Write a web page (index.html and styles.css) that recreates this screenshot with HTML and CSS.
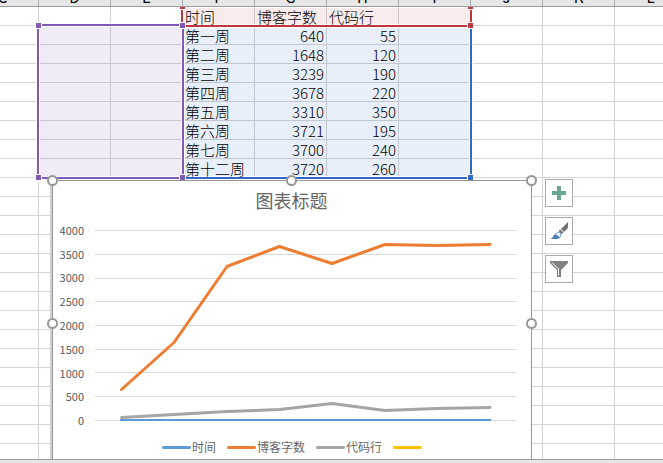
FILE: index.html
```
<!DOCTYPE html>
<html lang="zh-CN">
<head>
<meta charset="utf-8">
<title>博客字数</title>
<link rel="stylesheet" href="styles.css">
</head>
<body>
<main class="sheet">
  <div class="columns">
    <span>C</span><span>D</span><span>E</span><span>F</span><span>G</span><span>H</span><span>I</span><span>J</span><span>K</span><span>L</span>
  </div>
  <div class="cells">
    <div class="range range-values"><i class="handle se"></i></div>
    <div class="range range-names"><i class="handle nw"></i><i class="handle ne"></i><i class="handle se"></i></div>
    <div class="range range-labels"><i class="handle nw"></i><i class="handle ne"></i><i class="handle sw"></i><i class="handle se"></i></div>
    <table class="data">
      <thead>
        <tr><th>时间</th><th>博客字数</th><th>代码行</th><th></th></tr>
      </thead>
      <tbody>
        <tr><td>第一周</td><td class="num">640</td><td class="num">55</td><td></td></tr>
        <tr><td>第二周</td><td class="num">1648</td><td class="num">120</td><td></td></tr>
        <tr><td>第三周</td><td class="num">3239</td><td class="num">190</td><td></td></tr>
        <tr><td>第四周</td><td class="num">3678</td><td class="num">220</td><td></td></tr>
        <tr><td>第五周</td><td class="num">3310</td><td class="num">350</td><td></td></tr>
        <tr><td>第六周</td><td class="num">3721</td><td class="num">195</td><td></td></tr>
        <tr><td>第七周</td><td class="num">3700</td><td class="num">240</td><td></td></tr>
        <tr><td>第十二周</td><td class="num">3720</td><td class="num">260</td><td></td></tr>
      </tbody>
    </table>

    <section class="chart">
      <h1 class="chart-title">图表标题</h1>
      <div class="plot">
        <div class="axis">
          <span>4000</span><span>3500</span><span>3000</span><span>2500</span><span>2000</span><span>1500</span><span>1000</span><span>500</span><span>0</span>
        </div>
        <svg class="lines" viewBox="0 0 421 214" fill="none">
          <path stroke="#d9d9d9" d="M0 12.5H421M0 36.5H421M0 60.5H421M0 83.5H421M0 107.5H421M0 131.5H421M0 154.5H421M0 178.5H421M0 202.5H421"/>
          <g stroke-width="3" stroke-linejoin="round" stroke-linecap="round">
            <path stroke="#5b9bd5" stroke-width="2" stroke-linecap="butt" d="M25 202H396"/>
            <path stroke="#ed7d31" d="M26.5 171.5L79 124.5L132 48.5L184.500 28.500L237 45.500L290 26.500L342 27.500L395 26.500"/>
            <path stroke="#a5a5a5" d="M26.500 199.500L79 196.500L132 193.500L184.500 191.500L237 185.500L290 192.500L342 190.500L395 189.500"/>
          </g>
        </svg>
      </div>
      <ul class="legend">
        <li><i class="swatch blue"></i>时间</li>
        <li><i class="swatch orange"></i>博客字数</li>
        <li><i class="swatch gray"></i>代码行</li>
        <li><i class="swatch yellow"></i></li>
      </ul>
      <i class="grip top left"></i><i class="grip top center"></i><i class="grip top right"></i>
      <i class="grip middle left"></i><i class="grip middle right"></i>
    </section>

    <div class="tools">
      <button type="button" aria-label="图表元素">
        <svg viewBox="0 0 26 26"><path fill="#6ba792" d="M11 6h4v5h5v4h-5v5h-4v-5H6v-4h5z"/></svg>
      </button>
      <button type="button" aria-label="图表样式">
        <svg viewBox="0 0 26 26">
          <path fill="#737373" d="M22 4v6l-4 4-3-3z"/>
          <path fill="#737373" d="M14 11.500l3.500 3-2 1.500-3-3z"/>
          <path fill="#4a7ebb" d="M4.500 21c2.500-1 2.500-3 4-4.500 2-1.800 5-1.500 6 .5 1 2.500-1.500 4-4.500 4z"/>
          <path fill="#fff" stroke="#6b9bd0" d="M9.500 16.500c1-2 3-2.500 4.500-1.500 1.500 1.200 1 3.500-1 4.500-1-.5-.5-1.500-1.200-2-.7-.5-1.500 0-2.300-1z"/>
        </svg>
      </button>
      <button type="button" aria-label="图表筛选器">
        <svg viewBox="0 0 26 26">
          <path fill="#808080" d="M4 5h18v2l-7 7V21h-4v-7L4 7z"/>
          <path fill="none" stroke="#fff" d="M6 6.500l6.500 6.500V19.500"/>
        </svg>
      </button>
    </div>
  </div>
  <div class="footer"></div>
</main>
</body>
</html>
```
FILE: styles.css
```
* { box-sizing: border-box; }

body {
  margin: 0;
  background: #fff;
  color: #000;
  font-family: "Noto Sans CJK SC", sans-serif;
  font-weight: 300;
}

.sheet {
  display: flex;
  flex-direction: column;
  height: 100vh;
  overflow: hidden;
}

.columns {
  display: grid;
  grid-template-columns: 39px repeat(9, 72px);
  flex: none;
  height: 7px;
  overflow: hidden;
  align-content: end;
  background: #e6e6e6;
  border-bottom: 1px solid #9b9b9b;
}

.columns span {
  height: 20px;
  border-right: 1px solid #ababab;
  font-size: 15px;
  font-weight: 400;
  line-height: 22px;
  text-align: center;
}

.columns span:first-child {
  width: 72px;
  justify-self: end;
}

.cells {
  position: relative;
  flex: 1;
  min-height: 0;
  overflow: hidden;
  padding-left: 183px;
  background:
    repeating-linear-gradient(to bottom, transparent 0 18px, #d4d4d4 18px 19px),
    repeating-linear-gradient(to right, transparent 0 71px, #d4d4d4 71px 72px) -33px 0 / calc(100% + 72px) 100%;
}

.data {
  position: relative;
  width: 288px;
  table-layout: fixed;
  border-collapse: collapse;
  font-size: 15px;
  line-height: 19px;
}

.data th,
.data td {
  height: 19px;
  padding: 0 3px 0 2px;
  font-weight: 300;
  text-align: left;
  white-space: nowrap;
}

.data .num { text-align: right; }

.range {
  position: absolute;
  border: 2px solid;
  box-shadow: inset 0 0 0 1px #fff, 0 0 0 1px #fff;
}

.range-values {
  left: 182px;
  top: 18px;
  width: 290px;
  height: 154px;
  color: #2e69c5;
  background: rgba(46, 105, 197, 0.11);
}

.range-names {
  left: 181px;
  top: -2px;
  width: 291px;
  height: 22px;
  color: #c1363d;
  background: rgba(193, 54, 61, 0.1);
}

.range-labels {
  left: 37px;
  top: 17px;
  width: 147px;
  height: 155px;
  color: #8058b8;
  background: rgba(128, 88, 184, 0.12);
}

.handle {
  position: absolute;
  width: 5px;
  height: 5px;
  background: currentColor;
  box-shadow: 0 0 0 1px #fff;
}

.nw, .ne { top: -3px; }
.sw, .se { bottom: -3px; }
.nw, .sw { left: -3px; }
.ne, .se { right: -3px; }

.chart {
  position: absolute;
  left: 52px;
  top: 173px;
  width: 480px;
  padding: 4px 15px 8px 0;
  border: 1px solid #969696;
  box-shadow: -2px 0 0 #d2d2d2;
  background: #fff;
  color: #595959;
}

.chart-title {
  margin: 0 0 3px;
  padding-left: 14px;
  font-size: 18px;
  line-height: 30px;
  font-weight: 400;
  color: #666;
  text-align: center;
}

.plot {
  display: flex;
  gap: 11px;
}

.axis {
  display: flex;
  flex-direction: column;
  width: 31px;
  font-size: 11px;
  font-weight: 400;
  text-align: right;
}

.axis span {
  display: flex;
  flex: 1;
  align-items: center;
  justify-content: flex-end;
}

.lines {
  display: block;
  flex: 1;
  min-width: 0;
}

.legend {
  display: flex;
  justify-content: center;
  gap: 11px;
  margin: 6px 0 0;
  padding: 0 0 0 15px;
  list-style: none;
  font-size: 12px;
  font-weight: 400;
  line-height: 18px;
  color: #666;
}

.legend li {
  display: flex;
  align-items: center;
  gap: 1px;
}

.swatch {
  width: 29px;
  height: 3px;
  border-radius: 2px;
}

.blue { background: #5b9bd5; }
.orange { background: #ed7d31; }
.gray { background: #a5a5a5; }
.yellow { background: #ffc000; }

.grip {
  position: absolute;
  width: 11px;
  height: 11px;
  border: 2px solid #969696;
  border-radius: 50%;
  background: #fff;
}

.top { top: -6px; }
.middle { top: calc(50% - 5px); }
.left { left: -6px; }
.center { left: calc(50% - 6px); }
.right { right: -6px; }

.tools {
  position: absolute;
  left: 545px;
  top: 172px;
  display: flex;
  flex-direction: column;
  gap: 10px;
}

.tools button {
  width: 28px;
  height: 28px;
  padding: 0;
  border: 1px solid #ababab;
  background: #fff;
}

.tools svg {
  display: block;
  width: 26px;
  height: 26px;
}

.footer {
  flex: none;
  height: 4px;
  border-top: 1px solid #9b9b9b;
  background: #e6e6e6;
}
```
